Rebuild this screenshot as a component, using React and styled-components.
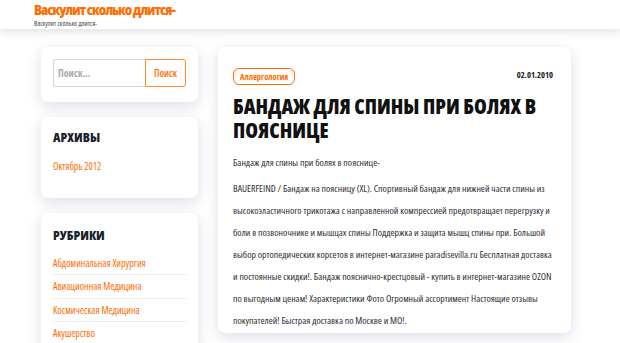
import React from "react";
import styled, { createGlobalStyle } from "styled-components";

const Global = createGlobalStyle`
  html, body { margin: 0; padding: 0; background: #fff; }
  body {
    font-family: "Open Sans", "DejaVu Sans Condensed", sans-serif;
    font-stretch: 75%;
    color: #333;
    overflow: hidden;
  }
  * { box-sizing: border-box; }
`;

const ORANGE = "#ff6c00";

const Header = styled.header`
  height: 29px;
  padding: 1px 0 0 34px;
  background: #fff;
  box-shadow: 0 3px 10px rgba(40, 45, 90, 0.15);
  position: relative;
  z-index: 2;
`;

const SiteTitle = styled.div`
  font-size: 14.5px;
  font-weight: 800;
  color: ${ORANGE};
  line-height: 18px;
  letter-spacing: -1px;
`;

const SiteDesc = styled.div`
  font-size: 7px;
  color: #444;
  line-height: 8px;
  margin-top: 1px;
`;

const Layout = styled.div`
  display: flex;
  gap: 20px;
  padding: 18px 0 0 41px;
  align-items: flex-start;
`;

const Sidebar = styled.aside`
  width: 157px;
  display: flex;
  flex-direction: column;
  gap: 15px;
  flex-shrink: 0;
`;

const Card = styled.div`
  background: #fff;
  border-radius: 7px;
  box-shadow: 0 4px 14px rgba(40, 45, 110, 0.16);
  padding: ${(p) => p.$pad || "12px"};
`;

const SearchForm = styled.form`
  display: flex;
  height: 28px;
`;

const SearchInput = styled.input`
  width: 92px;
  height: 28px;
  border: 1px solid #d6d6da;
  border-right: none;
  border-radius: 3px 0 0 3px;
  padding: 0 4px;
  font-family: inherit;
  font-stretch: 75%;
  font-size: 10px;
  font-weight: 700;
  color: #555;
  &::placeholder { color: #a8a8b0; }
  outline: none;
`;

const SearchButton = styled.button`
  width: 41px;
  height: 28px;
  border: 1px solid #ff8a2a;
  border-radius: 0 3px 3px 0;
  background: #fff;
  color: ${ORANGE};
  font-family: inherit;
  font-stretch: 75%;
  font-size: 10px;
  font-weight: 600;
  padding: 0;
`;

const WidgetTitle = styled.h3`
  margin: 0;
  font-size: 13px;
  font-weight: 800;
  color: #1b1f2e;
  line-height: 18px;
  text-transform: uppercase;
`;

const LinkList = styled.ul`
  list-style: none;
  margin: ${(p) => p.$mt || "10px"} 0 0;
  padding: 0;
`;

const LinkItem = styled.li`
  font-size: 10px;
  color: ${ORANGE};
  line-height: 14.5px;
  padding: 4px 0;
  border-bottom: ${(p) => (p.$sep ? "1px solid #ececf0" : "none")};
`;

const Main = styled.main`
  width: 353px;
  flex-shrink: 0;
`;

const MetaRow = styled.div`
  display: flex;
  justify-content: space-between;
  align-items: flex-start;
`;

const Tag = styled.span`
  display: inline-flex;
  align-items: center;
  height: 17px;
  padding: 0 6px;
  border: 1.5px solid ${ORANGE};
  border-radius: 6px;
  color: ${ORANGE};
  font-size: 8.5px;
  font-weight: 700;
`;

const DateText = styled.span`
  font-size: 8.5px;
  font-weight: 700;
  color: #222;
  margin-top: 1px;
`;

const PostTitle = styled.h1`
  margin: 9px 0 0;
  font-size: 20.6px;
  font-weight: 800;
  line-height: 24px;
  color: #111;
  text-transform: uppercase;
`;

const Para = styled.p`
  margin: ${(p) => p.$mt || "0"} 0 0;
  font-size: 9.8px;
  line-height: 22px;
  color: #2e2e33;
`;

export default function App() {
  return (
    <>
      <Global />
      <Header>
        <SiteTitle>Васкулит сколько длится-</SiteTitle>
        <SiteDesc>Васкулит сколько длится-</SiteDesc>
      </Header>
      <Layout>
        <Sidebar>
          <Card $pad="12px 12px 15px">
            <SearchForm onSubmit={(e) => e.preventDefault()}>
              <SearchInput placeholder="Поиск..." />
              <SearchButton type="submit">Поиск</SearchButton>
            </SearchForm>
          </Card>
          <Card $pad="11px 12px 20px">
            <WidgetTitle>Архивы</WidgetTitle>
            <LinkList $mt="9px">
              <LinkItem>Октябрь 2012</LinkItem>
            </LinkList>
          </Card>
          <Card $pad="13px 12px 20px">
            <WidgetTitle>Рубрики</WidgetTitle>
            <LinkList $mt="8px">
              <LinkItem $sep>Абдоминальная Хирургия</LinkItem>
              <LinkItem $sep>Авиационная Медицина</LinkItem>
              <LinkItem $sep>Космическая Медицина</LinkItem>
              <LinkItem $sep>Акушерство</LinkItem>
            </LinkList>
          </Card>
        </Sidebar>
        <Main>
          <Card $pad="21px 18px 1px 15px">
            <MetaRow>
              <Tag>Аллергология</Tag>
              <DateText>02.01.2010</DateText>
            </MetaRow>
            <PostTitle>Бандаж для спины при болях в пояснице</PostTitle>
            <Para $mt="10px">Бандаж для спины при болях в пояснице-</Para>
            <Para $mt="4px">
              BAUERFEIND / Бандаж на поясницу (XL). Спортивный бандаж для нижней части спины из
              высокоэластичного трикотажа с направленной компрессией предотвращает перегрузку и
              боли в позвоночнике и мышцах спины Поддержка и защита мышц спины при. Большой выбор
              ортопедических корсетов в интернет-магазине paradisevilla.ru Бесплатная доставка и
              постоянные скидки!. Бандаж пояснично-крестцовый - купить в интернет-магазине OZON по
              выгодным ценам! Характеристики Фото Огромный ассортимент Настоящие отзывы
              покупателей! Быстрая доставка по Москве и МО!.
            </Para>
          </Card>
        </Main>
      </Layout>
    </>
  );
}
